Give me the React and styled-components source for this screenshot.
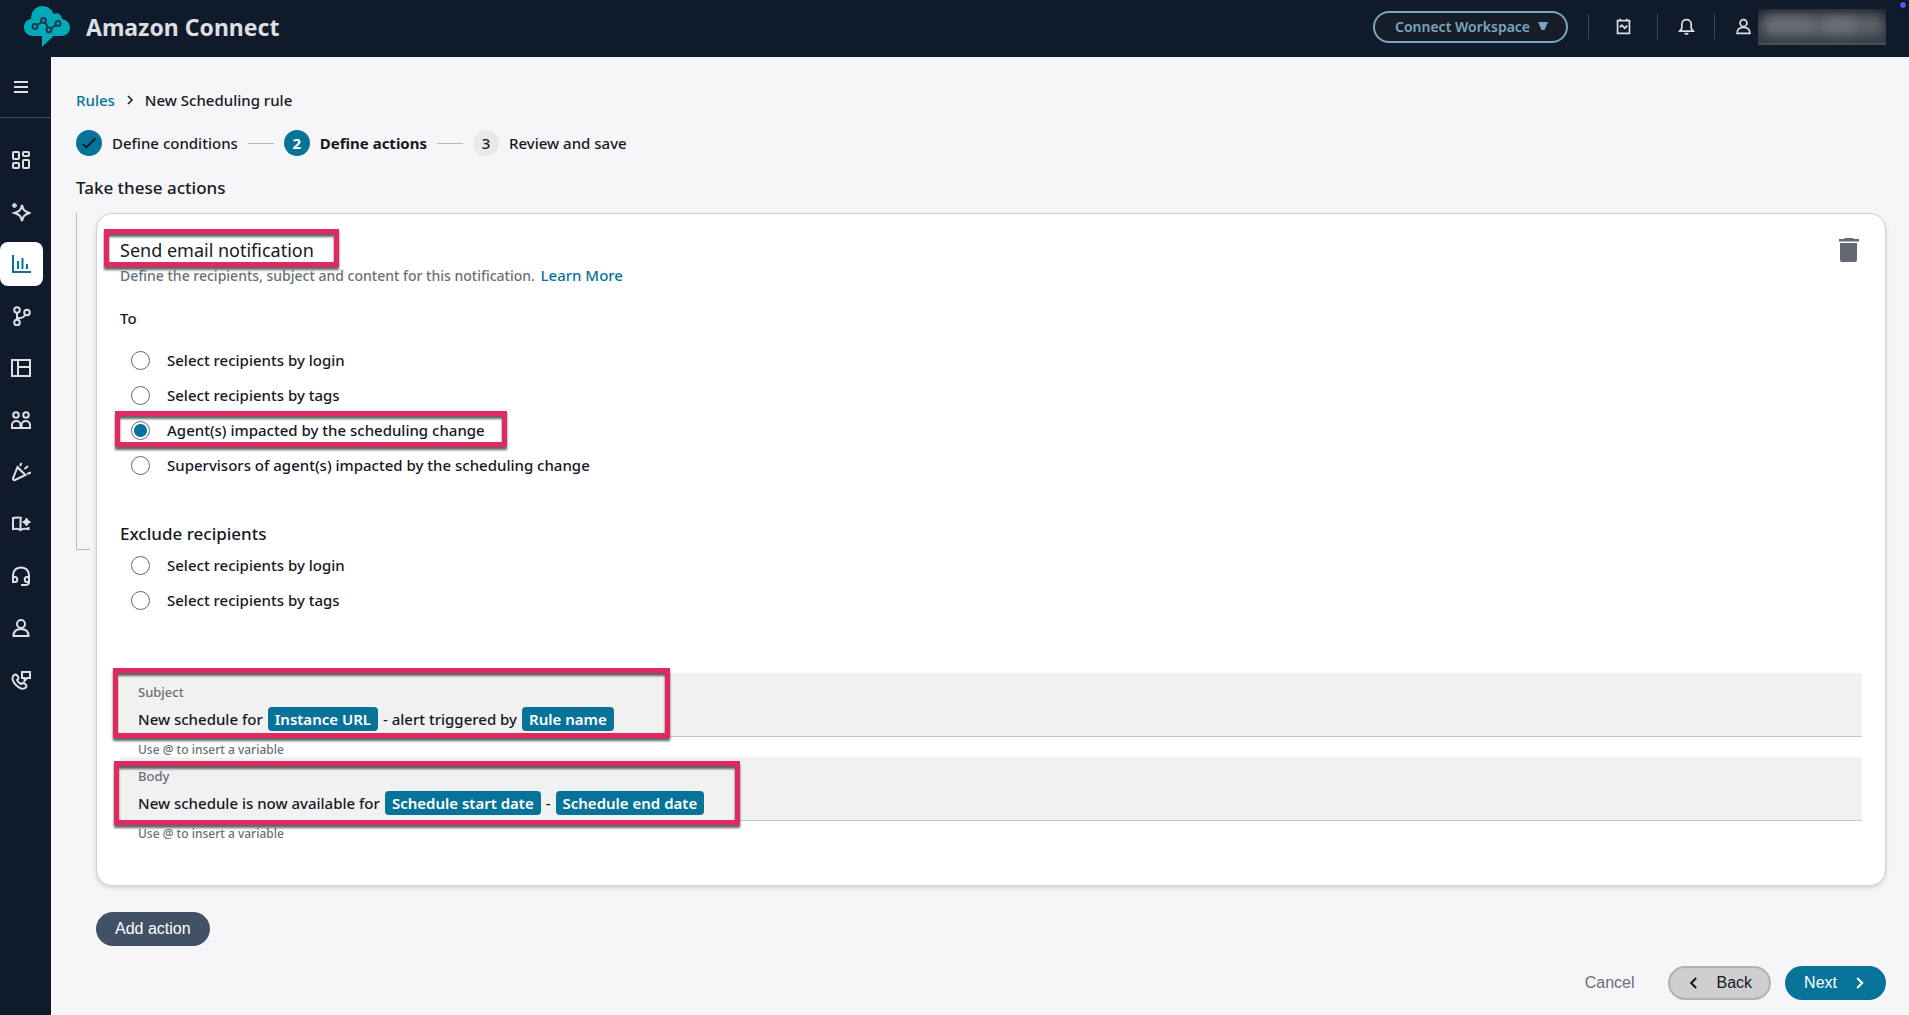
import React, { useState } from "react"
import styled, { createGlobalStyle, css } from "styled-components"

const navy = "#0f1b2a"
const teal = "#077398"
const ink = "#16191f"
const muted = "#687078"
const pink = "#e02a5f"
const pale = "#dedee3"

const GlobalStyle = createGlobalStyle`
  *, *::before, *::after { box-sizing: border-box; }
  body {
    margin: 0;
    background: #f6f6f9;
    color: ${ink};
    font-family: "Noto Sans", "Open Sans", sans-serif;
    font-size: 15px;
    font-weight: 500;
    line-height: 24px;
  }
  button, input { font: inherit; }
  button { cursor: pointer; }
`

const Page = styled.div`
  min-height: 100vh;
  display: flex;
  flex-direction: column;
`

const Header = styled.header`
  position: relative;
  display: flex;
  align-items: center;
  height: 57px;
  padding: 0 23px 4px 24px;
  background: ${navy};
  color: ${pale};
`

const Brand = styled.a`
  display: flex;
  align-items: center;
  gap: 15px;
  margin-right: auto;
  color: ${pale};
  font-size: 23px;
  font-weight: 700;
  text-decoration: none;
`

const WorkspaceButton = styled.button`
  display: flex;
  align-items: center;
  justify-content: space-between;
  width: 195px;
  height: 32px;
  margin-right: 20px;
  padding: 0 18px 0 20px;
  border: 2px solid #7aa5c0;
  border-radius: 16px;
  background: #171d26;
  color: #7aa5c0;
  font-size: 14px;
  font-weight: 600;
`

const HeaderCell = styled.div`
  display: flex;
  align-items: center;
  justify-content: center;
  width: ${(p) => p.$width};
  height: 25px;
  padding-left: ${(p) => p.$indent || 0};
  gap: 6px;
  border-left: 1px solid #3b4656;
`

const IconButton = styled.button`
  display: flex;
  padding: 0;
  border: 0;
  background: none;
  color: inherit;
`

const UserName = styled.div`
  width: 128px;
  height: 36px;
  overflow: hidden;
  background: linear-gradient(#1b2430, #333a44 50%, #353b44 90%, #4c5056);

  &::before {
    content: "";
    display: block;
    height: 22px;
    margin: 5px 4px;
    border-radius: 8px;
    background: linear-gradient(90deg, #6b6e76 40%, #565a62 45%, #6e7178 55%, #6e7178 75%, #565a61 82%, #6a6d74);
    filter: blur(6px);
  }
`

const StatusDot = styled.span`
  position: absolute;
  top: 2px;
  right: 3px;
  width: 6px;
  height: 6px;
  border-radius: 50%;
  background: #5b55f0;
  box-shadow: 0 0 0 1px #05080f;
`

const Body = styled.div`
  flex: 1;
  display: flex;
`

const Sidebar = styled.nav`
  flex: none;
  width: 51px;
  background: ${navy};
  color: ${pale};
`

const MenuToggle = styled.div`
  padding: 8px 0 8px;
  border-bottom: 1px solid #414d5c;
`

const NavList = styled.div`
  display: flex;
  flex-direction: column;
  gap: 8px;
  padding-top: 20px;
`

const NavButton = styled.button`
  display: flex;
  align-items: center;
  justify-content: center;
  width: 43px;
  height: 44px;
  padding: 0 1px 0 0;
  border: 0;
  border-radius: 8px;
  background: ${(p) => (p.$active ? "#fff" : "none")};
  color: ${(p) => (p.$active ? teal : "inherit")};
`

const Main = styled.main`
  flex: 1;
  min-width: 0;
  padding: 31px 23px 15px 25px;
`

const Breadcrumb = styled.nav`
  display: flex;
  align-items: center;
  gap: 10px;
`

const Link = styled.a`
  color: ${teal};
  text-decoration: none;
`

const Steps = styled.ol`
  display: flex;
  align-items: center;
  gap: 10px;
  margin: 18px 0 20px;
  padding: 0;
  list-style: none;
`

const Step = styled.li`
  display: flex;
  align-items: center;
  gap: 10px;
  font-weight: ${(p) => (p.$current ? 700 : 500)};

  &:not(:first-child)::before {
    content: "";
    width: 26px;
    height: 1px;
    background: #b5b8bd;
  }
`

const StepMark = styled.span`
  display: flex;
  align-items: center;
  justify-content: center;
  width: 26px;
  height: 26px;
  border-radius: 50%;
  background: ${(p) => (p.$filled ? teal : "#e9e9ec")};
  color: ${(p) => (p.$light ? "#fff" : ink)};
`

const SectionTitle = styled.h2`
  margin: 0 0 13px;
  font-size: 17px;
  font-weight: 500;
  line-height: 24px;
`

const ActionRow = styled.div`
  display: flex;
  gap: 6px;
`

const Bracket = styled.div`
  flex: none;
  display: flex;
  flex-direction: column;
  width: 14px;

  &::before,
  &::after {
    content: "";
    flex: 1;
  }
  &::before {
    border: solid #b9bbc0;
    border-width: 0 0 1px 1px;
  }
`

const Card = styled.section`
  flex: 1;
  min-width: 0;
  padding: 22px 23px 44px;
  border: 1px solid #d0d1d4;
  border-radius: 16px;
  background: #fff;
  box-shadow: 0 2px 4px rgba(0, 0, 0, 0.14);
`

const CardHead = styled.div`
  display: flex;
  justify-content: space-between;
  align-items: flex-start;
`

/* pink marker frame, drawn over the element it marks */
const marker = css`
  position: relative;

  &::after {
    content: "";
    position: absolute;
    inset: ${(p) => p.$marker};
    width: ${(p) => p.$markerWidth || "auto"};
    border: 5px solid ${pink};
    filter: drop-shadow(0 3px 1px rgba(0, 0, 0, 0.6));
    pointer-events: none;
  }
`

const CardTitle = styled.h3`
  ${marker}
  display: inline-block;
  margin: 0;
  font-size: 18px;
  font-weight: 400;
  line-height: 28px;
`

const Description = styled.p`
  margin: 0;
  color: ${muted};
  font-size: 14px;
  line-height: 22px;

  a {
    margin-left: 2px;
    font-size: 15px;
  }
`

const DeleteButton = styled(IconButton)`
  padding: 1px 3px 0 0;
  color: #656871;
`

const RadioGroup = styled.fieldset`
  display: flex;
  flex-direction: column;
  align-items: flex-start;
  gap: 11px;
  margin: ${(p) => p.$margin};
  padding: 0 0 0 11px;
  border: 0;
`

const Legend = styled.legend`
  margin: 0 0 ${(p) => p.$gap} -11px;
  padding: 0;
  font-size: ${(p) => p.$size};
`

const RadioLabel = styled.label`
  display: flex;
  align-items: center;
  gap: 17px;
  ${(p) => p.$marker && marker}
`

const Radio = styled.input.attrs({ type: "radio" })`
  appearance: none;
  width: 19px;
  height: 19px;
  margin: 0;
  border: 1px solid #656871;
  border-radius: 50%;
  background: #fff;

  &:checked {
    background: radial-gradient(circle, ${teal} 6px, #fff 7px);
  }
`

const Field = styled.div`
  ${marker}
  padding: 10px 18px 5px;
  border-bottom: 1px solid #c3c5c9;
  background: #f1f1f1;
`

const FieldLabel = styled.div`
  margin-bottom: 6px;
  color: ${muted};
  font-size: 13px;
  line-height: 18px;
`

const FieldValue = styled.div`
  display: flex;
  align-items: center;
  gap: 5px;
  outline: 0;
`

const Chip = styled.span`
  padding: 0 7px;
  border-radius: 4px;
  background: ${teal};
  color: #fff;
  font-weight: 600;
`

const Hint = styled.div`
  padding: 5px 18px 0;
  color: ${muted};
  font-size: 12px;
  line-height: 15px;
`

const Button = styled.button`
  display: inline-flex;
  align-items: center;
  justify-content: center;
  gap: 16px;
  height: 34px;
  padding: 0 17px;
  border: 2px solid ${(p) => p.$border || "transparent"};
  border-radius: 17px;
  background: ${(p) => p.$bg || "none"};
  background-clip: border-box;
  background-origin: border-box;
  color: ${(p) => p.$color || "#fff"};
  font-family: "Liberation Sans", Arial, sans-serif;
  font-size: 16px;
  font-weight: 400;
`

const AddRow = styled.div`
  padding: 26px 0 20px 20px;
`

const Footer = styled.footer`
  display: flex;
  justify-content: flex-end;
  gap: 14px;
`

const Icon = ({ size = 20, sw = 2, children }) => (
  <svg width={size} height={size} viewBox="0 0 20 20" fill="none" stroke="currentColor" strokeWidth={sw} aria-hidden="true">
    {children}
  </svg>
)

const Logo = () => (
  <svg width="47" height="42" viewBox="0 0 47 42" aria-hidden="true">
    <path
      d="M10 30C4 30 0 26.500 0 21.500C0 16.500 3 13.500 7 13C7 5 12 0 18.500 0C24 0 28 3.500 30 8.500C32 6 37.500 7 38 13C43 14 46 17 46 21.500C46 26.500 42 30 37 30H29.500L18 41V30Z"
      fill="#00a9b8"
    />
    <g fill="none" stroke="#1d3a4a" strokeWidth="2">
      <path d="M13 19L17.500 16.500M21.500 17L24 22M27 22.500L32 19" />
      <circle cx="11" cy="20.500" r="2.400" />
      <circle cx="19.500" cy="14.500" r="2.400" />
      <circle cx="25" cy="24" r="2.400" />
      <circle cx="34" cy="17.500" r="2.400" />
    </g>
  </svg>
)

const person = <><circle cx="10" cy="6" r="4" /><path d="M2.500 18C2.500 13.500 5.500 11 10 11S17.500 13.500 17.500 18Z" /></>

const navIcons = [
  ["Dashboards", <>
    <rect x="2" y="2" width="6" height="7" rx="1" /><rect x="12" y="2" width="6" height="4" rx="1" />
    <rect x="2" y="13" width="6" height="5" rx="1" /><rect x="12" y="10" width="6" height="8" rx="1" />
  </>],
  ["Optimization", <>
    <path d="M11 3C12 8 13.500 9.500 18.500 11C13.500 12.500 12 14 11 19C10 14 8.500 12.500 3.500 11C8.500 9.500 10 8 11 3Z" />
    <path d="M3.500 1V6M1 3.500H6" />
  </>],
  ["Analytics", <path d="M2 1V18H20M7 15V7M11.500 15V4M16 15V10" />],
  ["Routing", <>
    <circle cx="6" cy="4" r="2.800" /><circle cx="6" cy="16.500" r="2.800" /><circle cx="16" cy="6.500" r="2.800" />
    <path d="M6 7V13.500M14 9C13 12 10 12 6 12.500" />
  </>],
  ["Channels", <path d="M1 2H19V18H1ZM7 2V18M7 9H19" />],
  ["Users", <>
    <circle cx="5" cy="5" r="2.800" /><circle cx="15" cy="5" r="2.800" />
    <path d="M1 18V15C1 9.500 9.500 9.500 9.500 15V18ZM10.500 18V15C10.500 9.500 19 9.500 19 15V18ZM1 18H19" />
  </>],
  ["Campaigns", <path d="M6.500 5L2 16.500C2 18 3 18.500 4 18L14.500 13ZM6 5L15 13.500M9 4L10.500 1M13.500 7L17 4M16 12L20 10.500" />],
  ["Learning", <>
    <path d="M11 4C9 3.500 5 3.500 2 4V15C5 14.500 8 14.500 9.500 16C11 14.500 14 14.500 17.500 15V13M9.500 5V16" />
    <path d="M15.500 4L17 6.500L19.500 8L17 9.500L15.500 12L14 9.500L11.500 8L14 6.500Z" fill="currentColor" strokeWidth="1" />
  </>],
  ["Contact control", <>
    <path d="M2 12V9C2 -1 18 -1 18 9V16C18 18 16 19 14 19H10" />
    <path d="M2 11H4C7 11 7 16 4 16H2ZM18 11H16C13 11 13 16 16 16H18Z" />
  </>],
  ["Profile", person],
  ["Contacts", <>
    <path d="M3 5C0 8 2 12 5 15C8 18 11 20 14 18C16 17 16 15 14 14C12 12.500 11 13 10 14C8 13 7 12 6 10C7.500 9 8 8 7 6.500C5.500 4.500 4.500 4 3 5Z" />
    <path d="M11 2H19V8H16L13.500 11V8H11Z" />
  </>],
]

const recipients = [
  "Select recipients by login",
  "Select recipients by tags",
  "Agent(s) impacted by the scheduling change",
  "Supervisors of agent(s) impacted by the scheduling change",
]

const App = () => {
  const [to, setTo] = useState(recipients[2])
  const [exclude, setExclude] = useState("")

  return (
    <Page>
      <GlobalStyle />
      <Header>
        <Brand href="#">
          <Logo />
          Amazon Connect
        </Brand>
        <WorkspaceButton>
          Connect Workspace
          <svg width="10" height="9" viewBox="0 0 10 9" fill="currentColor" aria-hidden="true"><path d="M0 0H10L6.500 8H3.500Z" /></svg>
        </WorkspaceButton>
        <HeaderCell $width="69px">
          <IconButton aria-label="Calendar">
            <Icon size={17}><path d="M3 3H17V18H3ZM6 1V4M14 1V4M5.500 11L8 8.500L11.500 12L14.500 9" /></Icon>
          </IconButton>
        </HeaderCell>
        <HeaderCell $width="57px">
          <IconButton aria-label="Notifications">
            <Icon size={17}><path d="M2 15.500H18L15.500 12V7.500C15.500 0 4.500 0 4.500 7.500V12ZM8 17.500C9 19.500 11 19.500 12 17.500" /></Icon>
          </IconButton>
        </HeaderCell>
        <HeaderCell $indent="20px">
          <Icon size={17}>{person}</Icon>
          <UserName />
        </HeaderCell>
        <StatusDot />
      </Header>

      <Body>
        <Sidebar>
          <MenuToggle>
            <NavButton aria-label="Menu"><Icon><path d="M3 5H17M3 10H17M3 15H17" /></Icon></NavButton>
          </MenuToggle>
          <NavList>
            {navIcons.map(([name, shape]) => (
              <NavButton key={name} aria-label={name} $active={name === "Analytics"}>
                <Icon>{shape}</Icon>
              </NavButton>
            ))}
          </NavList>
        </Sidebar>

        <Main>
          <Breadcrumb>
            <Link href="#">Rules</Link>
            <Icon size={10} sw={3}><path d="M6 2L14 10L6 18" /></Icon>
            <span>New Scheduling rule</span>
          </Breadcrumb>
          <Steps>
            <Step>
              <StepMark $filled><Icon size={18}><path d="M3 11L7 15L17 5" /></Icon></StepMark>
              Define conditions
            </Step>
            <Step $current>
              <StepMark $filled $light>2</StepMark>
              Define actions
            </Step>
            <Step>
              <StepMark>3</StepMark>
              Review and save
            </Step>
          </Steps>

          <SectionTitle>Take these actions</SectionTitle>
          <ActionRow>
            <Bracket />
            <Card>
              <CardHead>
                <CardTitle $marker="-7px -25px -3px -16px">Send email notification</CardTitle>
                <DeleteButton aria-label="Delete action">
                  <svg width="20" height="26" viewBox="0 0 20 26" fill="currentColor" aria-hidden="true">
                    <path d="M0 2H5L6 1H14L15 2H20V4.500H0ZM1 6H18V23Q18 25 16 25H3Q1 25 1 23Z" />
                  </svg>
                </DeleteButton>
              </CardHead>
              <Description>
                Define the recipients, subject and content for this notification. <Link href="#">Learn More</Link>
              </Description>

              <RadioGroup $margin="19px 0 45px">
                <Legend $size="15px" $gap="18px">To</Legend>
                {recipients.map((name) => (
                  <RadioLabel key={name} $marker={name === recipients[2] && "-7px -22px -5px -16px"}>
                    <Radio name="to" checked={to === name} onChange={() => setTo(name)} />
                    {name}
                  </RadioLabel>
                ))}
              </RadioGroup>
              <RadioGroup $margin="0 0 61px">
                <Legend $size="17px" $gap="7px">Exclude recipients</Legend>
                {recipients.slice(0, 2).map((name) => (
                  <RadioLabel key={name}>
                    <Radio name="exclude" checked={exclude === name} onChange={() => setExclude(name)} />
                    {name}
                  </RadioLabel>
                ))}
              </RadioGroup>

              <Field $marker="-5px auto -2px -7px" $markerWidth="557px">
                <FieldLabel id="subject">Subject</FieldLabel>
                <FieldValue role="textbox" aria-labelledby="subject" contentEditable suppressContentEditableWarning>
                  New schedule for <Chip>Instance URL</Chip> - alert triggered by <Chip>Rule name</Chip>
                </FieldValue>
              </Field>
              <Hint>Use @ to insert a variable</Hint>
              <Field $marker="4px auto -5px -6px" $markerWidth="626px">
                <FieldLabel id="body">Body</FieldLabel>
                <FieldValue role="textbox" aria-labelledby="body" contentEditable suppressContentEditableWarning>
                  New schedule is now available for <Chip>Schedule start date</Chip> - <Chip>Schedule end date</Chip>
                </FieldValue>
              </Field>
              <Hint>Use @ to insert a variable</Hint>
            </Card>
          </ActionRow>

          <AddRow>
            <Button $bg="#425166">Add action</Button>
          </AddRow>
          <Footer>
            <Button $color={muted}>Cancel</Button>
            <Button $bg="#cfcfd1" $border="#b1b1b3" $color={ink}>
              <Icon size={14} sw={3}><path d="M13 3L6 10L13 17" /></Icon>
              Back
            </Button>
            <Button $bg={teal}>
              Next
              <Icon size={14} sw={3}><path d="M6 3L13 10L6 17" /></Icon>
            </Button>
          </Footer>
        </Main>
      </Body>
    </Page>
  )
}
export default App
